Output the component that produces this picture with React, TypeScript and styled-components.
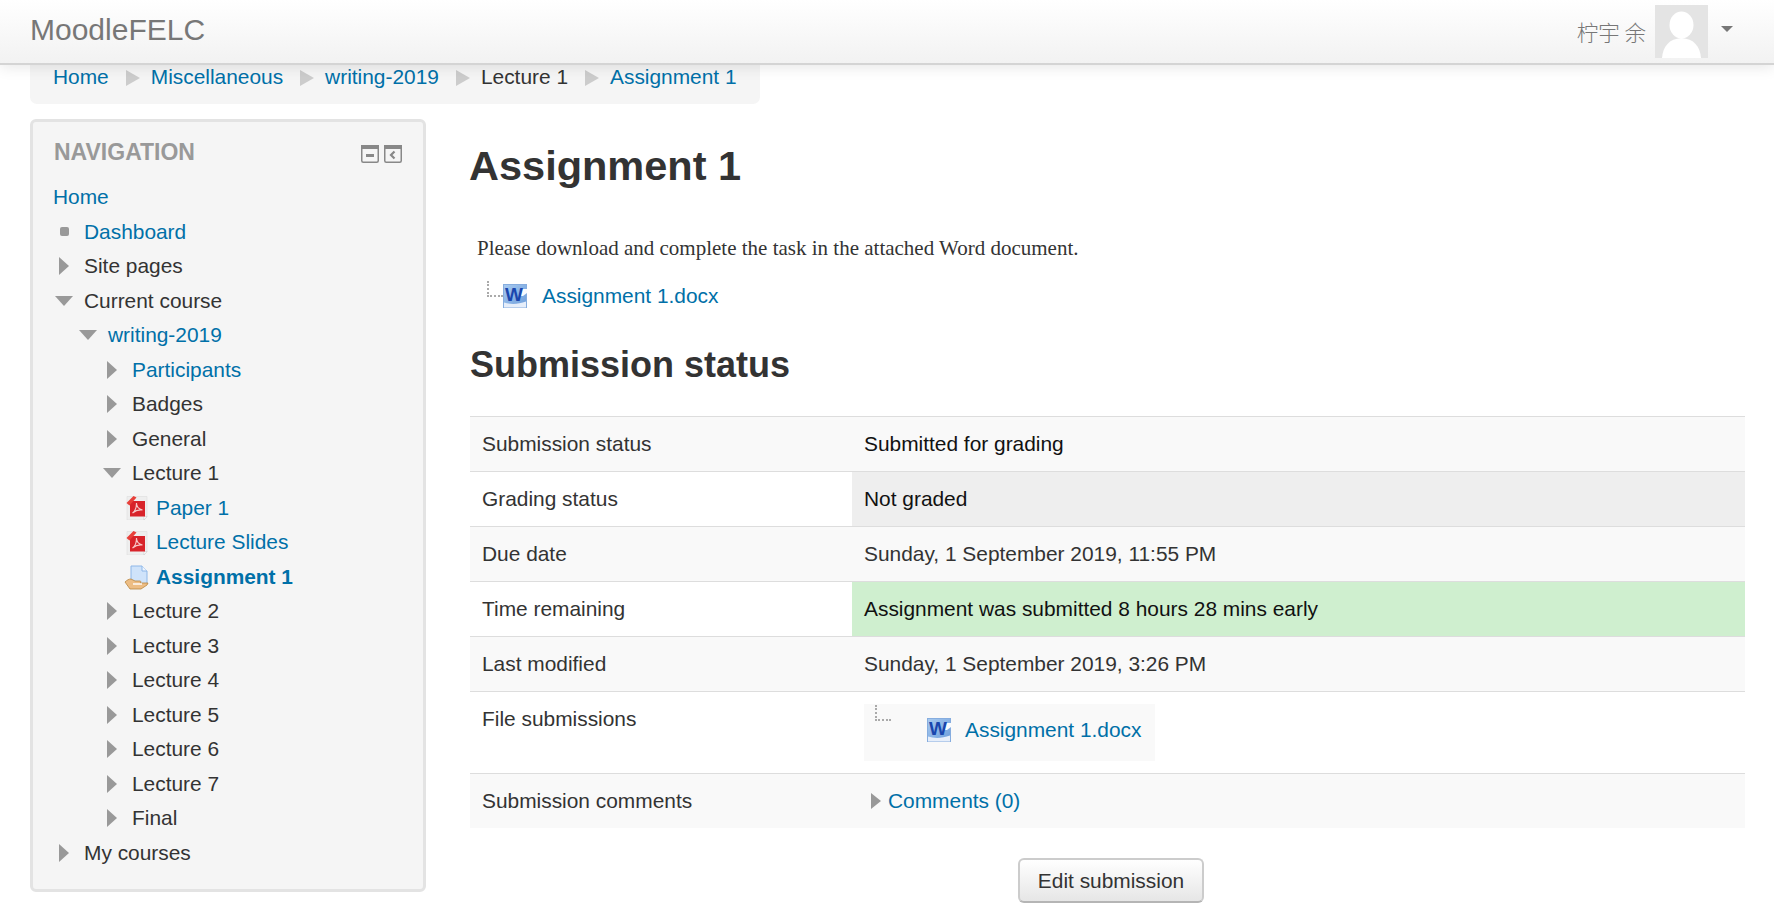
import React from "react";
import styled, { createGlobalStyle } from "styled-components";

const Global = createGlobalStyle`
  html, body { margin: 0; padding: 0; background: #fff; overflow: hidden; }
  body { font-family: "Liberation Sans", Arial, "Noto Sans CJK SC", sans-serif; font-size: 20.9px; color: #333; }
  a { color: #0070a8; text-decoration: none; }
`;

const Page = styled.div`
  width: 1774px;
  height: 914px;
  overflow: hidden;
`;

const NavBar = styled.header`
  position: relative;
  z-index: 2;
  height: 63px;
  box-sizing: content-box;
  display: flex;
  align-items: center;
  justify-content: space-between;
  padding: 0 41px 0 30px;
  background: linear-gradient(#ffffff, #f2f2f2);
  border-bottom: 2px solid #d4d4d4;
  box-shadow: 0 2px 14px rgba(0, 0, 0, 0.1);
`;

const Brand = styled.div`
  font-size: 30px;
  color: #777;
  margin-top: -4px;
`;

const UserMenu = styled.div`
  display: flex;
  align-items: center;
`;

const UserName = styled.span`
  font-family: "Noto Sans CJK SC", sans-serif;
  font-size: 21.5px;
  font-weight: 300;
  color: #777;
  margin-right: 9px;
  margin-top: -1px;
`;

const Avatar = styled.svg`
  width: 53px;
  height: 53px;
  display: block;
`;

const Caret = styled.span`
  width: 0;
  height: 0;
  margin-left: 13px;
  margin-top: -6px;
  border-left: 6px solid transparent;
  border-right: 6px solid transparent;
  border-top: 6px solid #777;
`;

const Body = styled.div`
  padding: 0 30px;
`;

const Breadcrumb = styled.nav`
  display: flex;
  align-items: center;
  width: 730px;
  height: 39px;
  box-sizing: border-box;
  padding: 0 23px 16px;
  background: #f5f5f5;
  border-radius: 0 0 7px 7px;
  line-height: 24px;
`;

const CrumbSep = styled.span`
  width: 0;
  height: 0;
  margin: 2px 11px 0 17px;
  border-top: 8px solid transparent;
  border-bottom: 8px solid transparent;
  border-left: 14px solid #ccc;
`;

const Columns = styled.div`
  display: flex;
  align-items: flex-start;
  margin-top: 15px;
`;

const NavBlock = styled.aside`
  flex: 0 0 396px;
  box-sizing: border-box;
  height: 773px;
  background: #f5f5f5;
  border: 3px solid #e3e3e3;
  border-radius: 6px;
`;

const BlockHead = styled.div`
  display: flex;
  align-items: center;
  justify-content: space-between;
  height: 38px;
  margin: 11px 21px 9px 21px;
`;

const BlockTitle = styled.h2`
  margin: 0;
  font-size: 23px;
  font-weight: bold;
  color: #999;
`;

const BlockControls = styled.div`
  display: flex;
  gap: 5px;
  margin-top: 4px;
`;

const Tree = styled.ul`
  list-style: none;
  margin: 0;
  padding: 0;
`;

const TreeRow = styled.li<{ $level: number; $bare?: boolean }>`
  display: flex;
  align-items: center;
  height: 34.5px;
  padding-left: ${(p) => (p.$bare ? 20 : 11 + 24 * (p.$level - 1))}px;
  line-height: 24px;
`;

const Slot = styled.span`
  flex: 0 0 40px;
  display: flex;
  align-items: center;
  justify-content: center;
`;

const Bullet = styled.span`
  width: 9px;
  height: 9px;
  border-radius: 2px;
  background: #999;
`;

const Closed = styled.span`
  width: 0;
  height: 0;
  border-top: 9px solid transparent;
  border-bottom: 9px solid transparent;
  border-left: 10px solid #999;
`;

const Open = styled.span`
  width: 0;
  height: 0;
  border-left: 9px solid transparent;
  border-right: 9px solid transparent;
  border-top: 10px solid #999;
`;

const Current = styled.a`
  font-weight: bold;
`;

const Main = styled.main`
  flex: 0 0 1275px;
  margin-left: 44px;
`;

const Heading = styled.h1`
  margin: 22px 0 0 -1px;
  font-size: 41.5px;
  line-height: 50px;
  font-weight: bold;
  color: #333;
`;

const Intro = styled.p`
  margin: 43px 0 0 7px;
  font-family: "Liberation Serif", "Times New Roman", serif;
  font-size: 21px;
  line-height: 28px;
  color: #333;
`;

const FileRow = styled.div`
  display: flex;
  align-items: center;
  height: 48px;
  margin: 10px 0 0 17px;
`;

const FileLink = styled.a`
  margin-left: 15px;
`;

const SubHeading = styled.h2`
  margin: 23px 0 0;
  font-size: 36px;
  line-height: 44px;
  font-weight: bold;
  color: #333;
`;

const Table = styled.table`
  width: 100%;
  margin-top: 29px;
  border-collapse: collapse;
  table-layout: fixed;
`;

const Row = styled.tr<{ $odd?: boolean }>`
  background: ${(p) => (p.$odd ? "#f9f9f9" : "#fff")};
`;

const Label = styled.td`
  width: 382px;
  box-sizing: border-box;
  height: 54px;
  padding: 0 12px;
  border-top: 1px solid #ddd;
  vertical-align: middle;
`;

const TopLabel = styled(Label)`
  vertical-align: top;
  padding-top: 15px;
`;

const Value = styled.td<{ $tone?: string }>`
  height: 54px;
  padding: 0 12px;
  border-top: 1px solid #ddd;
  vertical-align: middle;
  color: #111;
  background: ${(p) => p.$tone || "transparent"};
`;

const DateValue = styled(Value)`
  color: #333;
`;

const SubmittedBox = styled.div`
  display: flex;
  align-items: center;
  width: 291px;
  height: 57px;
  margin: 12px 0 12px;
  padding: 0 0 5px 11px;
  box-sizing: border-box;
  background: #f9f9f9;
`;

const BoxIcon = styled.span`
  display: flex;
  align-items: center;
  margin-left: 36px;
  margin-right: 14px;
`;

const Elbow = styled.span<{ $raised?: boolean }>`
  flex: 0 0 auto;
  width: 16px;
  height: 16px;
  box-sizing: border-box;
  border-left: 2px dotted #aaa;
  border-bottom: 2px dotted #aaa;
  margin-top: ${(p) => (p.$raised ? "-34px" : "-14px")};
`;

const CommentsRow = styled.div`
  display: flex;
  align-items: center;
  gap: 7px;
  padding-left: 7px;
`;

const SmallClosed = styled(Closed)`
  border-top-width: 8.5px;
  border-bottom-width: 8.5px;
`;

const ButtonWrap = styled.div`
  display: flex;
  justify-content: center;
  padding-left: 7px;
  margin-top: 30px;
`;

const Button = styled.button`
  width: 186px;
  height: 45px;
  font: 20.9px "Liberation Sans", Arial, sans-serif;
  color: #333;
  border: 2px solid #ccc;
  border-bottom-color: #b5b5b5;
  border-radius: 6px;
  background: linear-gradient(#ffffff, #e6e6e6);
`;

const WordSvg = styled.svg`
  display: block;
  flex: 0 0 auto;
`;

const WordIcon = () => (
  <WordSvg width="24" height="24" viewBox="0 0 24 24">
    <defs>
      <linearGradient id="wordBg" x1="0" y1="0" x2="1" y2="1">
        <stop offset="0" stopColor="#a9cbf0" />
        <stop offset="1" stopColor="#6a9bda" />
      </linearGradient>
    </defs>
    <rect x="0.5" y="0.5" width="23" height="23" fill="url(#wordBg)" stroke="#86addf" />
    <path d="M18 5h6v4l-4 3h-2z" fill="#fff" opacity="0.95" />
    <path d="M1 18.5c6 2 14 2 22-1v6H1z" fill="#e6eefa" />
    <text x="2" y="17" fontFamily="Liberation Sans" fontWeight="bold" fontSize="19" fill="#1a46ad">W</text>
  </WordSvg>
);

const IconBox = styled.svg`
  display: block;
`;

const PdfIcon = () => (
  <IconBox width="24" height="25" viewBox="0 0 24 25">
    <path d="M3 1.5h20v20l-3 3.5H3z" fill="#eeeeee" stroke="#dedede" strokeWidth="0.6" />
    <path d="M23 21.5l-3 3.5v-3.5z" fill="#fff" stroke="#bbb" strokeWidth="0.4" />
    <rect x="6" y="6" width="15" height="15.5" fill="#d8232a" />
    <path d="M2.5 8 L9.5 1 L12.5 2.5 L5.5 10.5 Z" fill="#e8403a" />
    <path d="M8.5 18c3-2 4-5 4-10 0 4 2 6 6 7-4-.5-7 .5-10 3z" fill="none" stroke="#f7c8c8" strokeWidth="1.1" />
  </IconBox>
);

const AssignIcon = () => (
  <IconBox width="25" height="26" viewBox="0 0 25 26">
    <path d="M7 2h11l5 5v13H7z" fill="#cfe3fa" stroke="#8eb7e8" />
    <path d="M18 2v5h5" fill="#eef5fe" stroke="#8eb7e8" />
    <path d="M1 18c2-2 4-3 6-3l4 2h5c1 0 1 1 0 2l8 0-1 2-6 4H6z" fill="#edbd84" stroke="#b7853f" strokeWidth="0.8" />
    <path d="M9 20h9" stroke="#fff" strokeWidth="1.4" />
  </IconBox>
);

const Ctl = ({ kind }: { kind: "min" | "left" }) => (
  <IconBox width="18" height="18" viewBox="0 0 18 18">
    <rect x="0.75" y="0.75" width="16.5" height="16.5" rx="1.5" fill="#f5f5f5" stroke="#888" strokeWidth="1.5" />
    <rect x="0" y="0" width="18" height="4" fill="#888" />
    {kind === "min" ? (
      <rect x="5" y="9" width="8" height="3" fill="#888" />
    ) : (
      <path d="M10.5 6.5L7 10l3.5 3.5" fill="none" stroke="#888" strokeWidth="2.2" />
    )}
  </IconBox>
);

type Item = {
  label: string;
  level: number;
  mark?: "bullet" | "closed" | "open" | "pdf" | "assign";
  link?: boolean;
  current?: boolean;
};

const items: Item[] = [
  { label: "Dashboard", level: 1, mark: "bullet", link: true },
  { label: "Site pages", level: 1, mark: "closed" },
  { label: "Current course", level: 1, mark: "open" },
  { label: "writing-2019", level: 2, mark: "open", link: true },
  { label: "Participants", level: 3, mark: "closed", link: true },
  { label: "Badges", level: 3, mark: "closed" },
  { label: "General", level: 3, mark: "closed" },
  { label: "Lecture 1", level: 3, mark: "open" },
  { label: "Paper 1", level: 4, mark: "pdf", link: true },
  { label: "Lecture Slides", level: 4, mark: "pdf", link: true },
  { label: "Assignment 1", level: 4, mark: "assign", link: true, current: true },
  { label: "Lecture 2", level: 3, mark: "closed" },
  { label: "Lecture 3", level: 3, mark: "closed" },
  { label: "Lecture 4", level: 3, mark: "closed" },
  { label: "Lecture 5", level: 3, mark: "closed" },
  { label: "Lecture 6", level: 3, mark: "closed" },
  { label: "Lecture 7", level: 3, mark: "closed" },
  { label: "Final", level: 3, mark: "closed" },
  { label: "My courses", level: 1, mark: "closed" },
];

const Mark = ({ mark }: { mark?: Item["mark"] }) => {
  if (mark === "bullet") return <Bullet />;
  if (mark === "closed") return <Closed />;
  if (mark === "open") return <Open />;
  if (mark === "pdf") return <PdfIcon />;
  if (mark === "assign") return <AssignIcon />;
  return null;
};

const crumbs = [
  { t: "Home", link: true },
  { t: "Miscellaneous", link: true },
  { t: "writing-2019", link: true },
  { t: "Lecture 1", link: false },
  { t: "Assignment 1", link: true },
];

export default function App() {
  return (
    <Page>
      <Global />
      <NavBar>
        <Brand>MoodleFELC</Brand>
        <UserMenu>
          <UserName>柠宇 余</UserName>
          <Avatar viewBox="0 0 53 53">
            <rect width="53" height="53" fill="#e4e4e4" />
            <ellipse cx="26.5" cy="20" rx="12" ry="13.5" fill="#fff" />
            <path d="M7 53c1-12 7-19 19.5-20C39 34 45 41 46 53z" fill="#fff" />
          </Avatar>
          <Caret />
        </UserMenu>
      </NavBar>
      <Body>
        <Breadcrumb>
          {crumbs.map((c, i) => (
            <React.Fragment key={c.t}>
              {i > 0 && <CrumbSep />}
              {c.link ? <a href="#">{c.t}</a> : <span>{c.t}</span>}
            </React.Fragment>
          ))}
        </Breadcrumb>
        <Columns>
          <NavBlock>
            <BlockHead>
              <BlockTitle>NAVIGATION</BlockTitle>
              <BlockControls>
                <Ctl kind="min" />
                <Ctl kind="left" />
              </BlockControls>
            </BlockHead>
            <Tree>
              <TreeRow $level={0} $bare>
                <a href="#">Home</a>
              </TreeRow>
              {items.map((it) => (
                <TreeRow $level={it.level} key={it.label}>
                  <Slot>
                    <Mark mark={it.mark} />
                  </Slot>
                  {it.current ? (
                    <Current href="#">{it.label}</Current>
                  ) : it.link ? (
                    <a href="#">{it.label}</a>
                  ) : (
                    <span>{it.label}</span>
                  )}
                </TreeRow>
              ))}
            </Tree>
          </NavBlock>
          <Main>
            <Heading>Assignment 1</Heading>
            <Intro>Please download and complete the task in the attached Word document.</Intro>
            <FileRow>
              <Elbow />
              <WordIcon />
              <FileLink href="#">Assignment 1.docx</FileLink>
            </FileRow>
            <SubHeading>Submission status</SubHeading>
            <Table>
              <tbody>
                <Row $odd>
                  <Label>Submission status</Label>
                  <Value>Submitted for grading</Value>
                </Row>
                <Row>
                  <Label>Grading status</Label>
                  <Value $tone="#eeeeee">Not graded</Value>
                </Row>
                <Row $odd>
                  <Label>Due date</Label>
                  <DateValue>Sunday, 1 September 2019, 11:55 PM</DateValue>
                </Row>
                <Row>
                  <Label>Time remaining</Label>
                  <Value $tone="#cfefcf">Assignment was submitted 8 hours 28 mins early</Value>
                </Row>
                <Row $odd>
                  <Label>Last modified</Label>
                  <DateValue>Sunday, 1 September 2019, 3:26 PM</DateValue>
                </Row>
                <Row>
                  <TopLabel>File submissions</TopLabel>
                  <Value>
                    <SubmittedBox>
                      <Elbow $raised />
                      <BoxIcon>
                        <WordIcon />
                      </BoxIcon>
                      <a href="#">Assignment 1.docx</a>
                    </SubmittedBox>
                  </Value>
                </Row>
                <Row $odd>
                  <Label>Submission comments</Label>
                  <Value>
                    <CommentsRow>
                      <SmallClosed />
                      <a href="#">Comments (0)</a>
                    </CommentsRow>
                  </Value>
                </Row>
              </tbody>
            </Table>
            <ButtonWrap>
              <Button>Edit submission</Button>
            </ButtonWrap>
          </Main>
        </Columns>
      </Body>
    </Page>
  );
}
